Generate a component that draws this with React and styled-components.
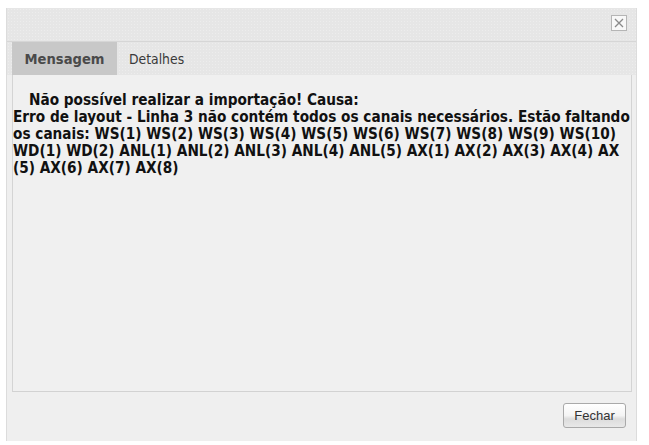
import React from "react";
import styled, { createGlobalStyle } from "styled-components";

const GlobalStyle = createGlobalStyle`
  html, body {
    margin: 0;
    padding: 0;
    background: #ffffff;
  }
  body {
    font-family: "DejaVu Sans Condensed", "DejaVu Sans", sans-serif;
  }
`;

const dots = `
  background-color: #e6e6e6;
  background-image: radial-gradient(#ededed 0.6px, transparent 0.8px);
  background-size: 3px 3px;
`;

const lines = [
  "Erro de layout - Linha 3 não contém todos os canais necessários. Estão faltando",
  "os canais: WS(1) WS(2) WS(3) WS(4) WS(5) WS(6) WS(7) WS(8) WS(9) WS(10)",
  "WD(1) WD(2) ANL(1) ANL(2) ANL(3) ANL(4) ANL(5) AX(1) AX(2) AX(3) AX(4) AX",
  "(5) AX(6) AX(7) AX(8)",
];

const App = () => {
  return (
    <>
      <GlobalStyle />
      <Dialog>
        <TitleBar>
          <CloseButton aria-label="Fechar">
            <svg width="10" height="10" viewBox="0 0 10 10">
              <path d="M1 1 L9 9 M9 1 L1 9" stroke="#8a8a8a" strokeWidth="1.3" />
            </svg>
          </CloseButton>
        </TitleBar>
        <TabBar>
          <Tab active>Mensagem</Tab>
          <Tab>Detalhes</Tab>
        </TabBar>
        <Panel>
          <Message>
            <Line indent>Não possível realizar a importação! Causa:</Line>
            {lines.map((l) => (
              <Line key={l}>{l}</Line>
            ))}
          </Message>
        </Panel>
        <Footer>
          <Button>Fechar</Button>
        </Footer>
      </Dialog>
    </>
  );
};

export default App;

const Dialog = styled.div`
  width: 631px;
  height: 433px;
  margin: 8px 0 0 6px;
  background: #efefef;
  border-left: 1px solid #dcdcdc;
  border-right: 1px solid #dcdcdc;
  box-sizing: border-box;
  display: flex;
  flex-direction: column;
`;

const TitleBar = styled.div`
  ${dots}
  height: 34px;
  border-bottom: 1px solid #d6d6d6;
  box-sizing: border-box;
  display: flex;
  justify-content: flex-end;
  align-items: center;
  padding-right: 9px;
`;

const CloseButton = styled.div`
  width: 16px;
  height: 16px;
  box-sizing: border-box;
  border: 1px solid #b5b5b5;
  background: #f8f8f8;
  display: flex;
  align-items: center;
  justify-content: center;
  margin-top: -4px;
`;

const TabBar = styled.div`
  ${dots}
  height: 33px;
  padding-left: 5px;
  padding-right: 4px;
  display: flex;
  align-items: stretch;
`;

const Tab = styled.div`
  display: flex;
  align-items: center;
  justify-content: center;
  padding: 0 12px;
  font-family: "DejaVu Sans Condensed", "DejaVu Sans", sans-serif;
  font-size: ${(p) => (p.active ? "14.6px" : "13.8px")};
  font-weight: ${(p) => (p.active ? 700 : 400)};
  color: ${(p) => (p.active ? "#4a4a4a" : "#3a3a3a")};
  background: ${(p) => (p.active ? "#c8c8c8" : "transparent")};
  width: ${(p) => (p.active ? "105px" : "auto")};
  box-sizing: border-box;
`;

const Panel = styled.div`
  margin: 0 4px 0 5px;
  height: 317px;
  background: #f0f0f0;
  border-left: 1px solid #d4d4d4;
  border-right: 1px solid #d4d4d4;
  border-bottom: 1px solid #d2d2d2;
  box-sizing: border-box;
`;

const Message = styled.div`
  padding: 17px 0 0 0;
  font-family: "DejaVu Sans Condensed", "DejaVu Sans", sans-serif;
  font-weight: 700;
  font-size: 15.2px;
  line-height: 17px;
  color: #111;
`;

const Line = styled.div`
  white-space: nowrap;
  padding-left: ${(p) => (p.indent ? "16px" : "0")};
`;

const Footer = styled.div`
  flex: 1;
  display: flex;
  justify-content: flex-end;
  align-items: flex-start;
  padding: 11px 10px 0 0;
`;

const Button = styled.div`
  width: 63px;
  height: 25px;
  box-sizing: border-box;
  border: 1px solid #a9a9a9;
  border-radius: 3px;
  background: linear-gradient(#ffffff 0%, #f4f4f4 50%, #dcdcdc 65%, #e8e8e8 100%);
  font-family: "Liberation Sans", Arial, sans-serif;
  font-size: 13px;
  color: #333;
  display: flex;
  align-items: center;
  justify-content: center;
`;
